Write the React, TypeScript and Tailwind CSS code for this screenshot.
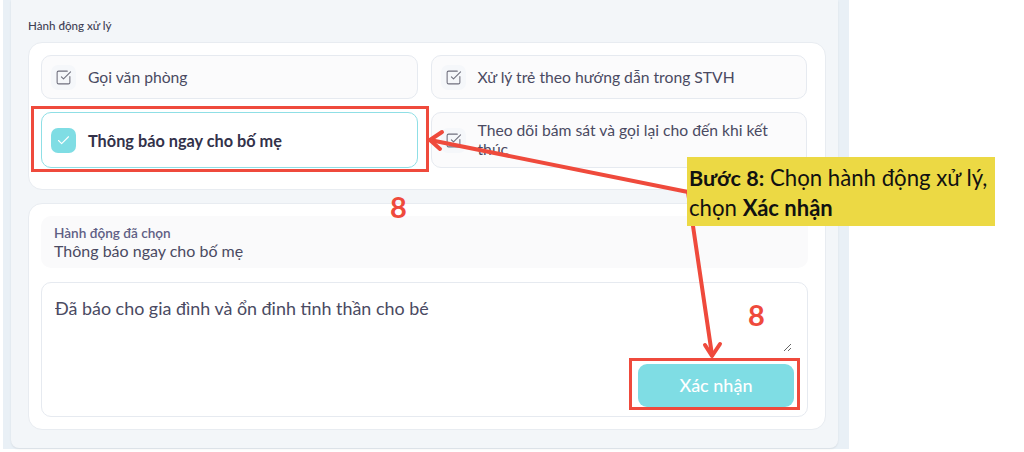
import { Check, SquareCheckBig } from "lucide-react";

function ActionItem({ label, tall, selected }: { label: string; tall?: boolean; selected?: boolean }) {
  return (
    <div
      className={`flex items-center gap-[12px] rounded-[10px] border px-[9px] ${tall ? "h-[56px]" : "h-[44px]"} ${
        selected ? "border-[#8fdfe6] bg-white" : "border-[#e6eaf0] bg-[#fbfbfc]"
      }`}
    >
      {selected ? (
        <div className="flex h-[25px] w-[25px] shrink-0 items-center justify-center rounded-[7px] bg-[#7fdde4] text-white">
          <Check size={15} strokeWidth={1.75} />
        </div>
      ) : (
        <div className="flex h-[25px] w-[25px] shrink-0 items-center justify-center rounded-[7px] bg-[#f5f7fa] text-[#6f6f7d]">
          <SquareCheckBig size={17} strokeWidth={1.5} />
        </div>
      )}
      <p className={`leading-[19px] ${selected ? "text-[16.3px] font-bold text-[#33324a]" : "text-[15.7px] font-normal text-[#4a4a62]"}`}>{label}</p>
    </div>
  );
}

export default function App() {
  return (
    <div className="relative h-[452px] w-[1024px] overflow-hidden bg-white font-['Lato',sans-serif]">
      <div className="ml-[3px] h-[449px] w-[846px] bg-[#e9f0f6] px-[8px] pb-[1px]">
        <div className="h-[448px] w-[827px] rounded-b-[8px] bg-[#f3f6f9] pl-[17px] pr-[12px] shadow-[0_1px_2px_rgba(0,0,0,0.08)]">
          <p className="pt-[17px] pb-[8px] text-[11.6px] leading-[17px] font-medium text-[#3f3f55]">Hành động xử lý</p>
          <div className="grid grid-cols-2 gap-[13px] rounded-[14px] border border-[#e8ecf1] bg-white pt-[12px] pr-[18px] pb-[21px] pl-[12px]">
            <ActionItem label="Gọi văn phòng" />
            <ActionItem label="Xử lý trẻ theo hướng dẫn trong STVH" />
            <ActionItem label="Thông báo ngay cho bố mẹ" tall selected />
            <ActionItem label="Theo dõi bám sát và gọi lại cho đến khi kết thúc" tall />
          </div>
          <div className="mt-[13px] h-[227px] rounded-[14px] border border-[#e8ecf1] bg-white pt-[12px] pr-[17px] pl-[12px]">
            <div className="h-[52px] rounded-[10px] bg-[#fafafb] px-[13px] pt-[9px]">
              <p className="text-[13.6px] leading-[16px] font-semibold text-[#5f5f85]">Hành động đã chọn</p>
              <p className="text-[16px] leading-[19px] text-[#4a4a62]">Thông báo ngay cho bố mẹ</p>
            </div>
            <div className="mt-[14px] flex h-[135px] flex-col rounded-[10px] border border-[#e6eaf0] bg-white">
              <textarea
                className="ml-[13px] mt-[13px] h-[56px] w-[737px] bg-white text-[17.9px] leading-[24px] text-[#4a4a62] outline-none"
                defaultValue="Đã báo cho gia đình và ổn đinh tinh thần cho bé"
              />
              <div className="mt-[12px] flex justify-end pr-[13px]">
                <button className="h-[43px] w-[156px] rounded-[9px] bg-[#7fdde4] text-[18px] font-medium text-white">Xác nhận</button>
              </div>
            </div>
          </div>
        </div>
      </div>

      {/* annotations on top of the screenshot */}
      <div className="absolute top-[106px] left-[31px] h-[66px] w-[398px] border-[3px] border-[#ef4a3c]" />
      <div className="absolute top-[358px] left-[629px] h-[52px] w-[171px] border-[3px] border-[#ef4a3c]" />
      <svg className="absolute top-0 left-0" width="1024" height="452" fill="none" stroke="#ef4a3c" strokeWidth="4" strokeLinecap="round" strokeLinejoin="round">
        <path d="M430 140L688 192L712 355" />
        <path d="M442 132L430 140L440 149" />
        <path d="M705 345L712 356L720 344" />
      </svg>
      <div className="absolute top-[157px] left-[687px] h-[69px] w-[308px] bg-[#ecd944] pt-[6px] pl-[2px] text-[22.2px] leading-[29px] text-[#111]">
        <b className="text-[21.6px]">Bước 8:</b> Chọn hành động xử lý,
        <br />
        chọn <b className="text-[22px]">Xác nhận</b>
      </div>
      <span className="absolute top-[189px] left-[390px] text-[29px] leading-[36px] font-bold text-[#ef4a3c]">8</span>
      <span className="absolute top-[297px] left-[748px] text-[29px] leading-[36px] font-bold text-[#ef4a3c]">8</span>
    </div>
  );
}
